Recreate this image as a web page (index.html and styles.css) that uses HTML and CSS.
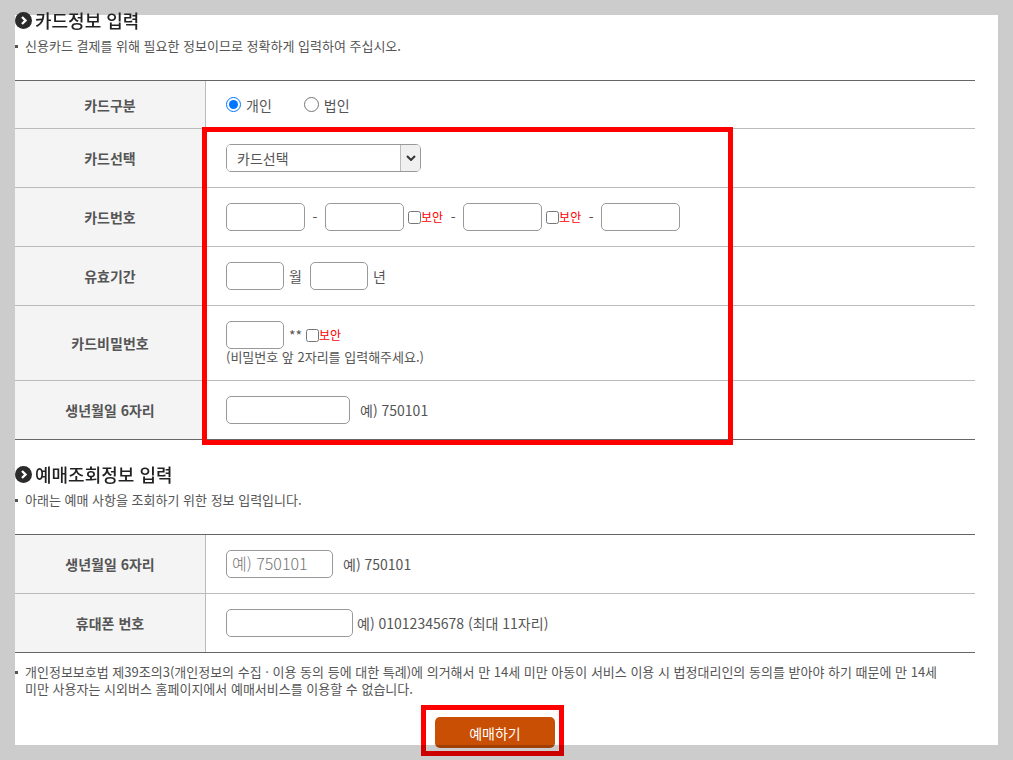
FILE: index.html
```html
<!DOCTYPE html>
<html lang="ko">
<head>
<meta charset="utf-8">
<title>카드정보 입력</title>
<link rel="stylesheet" href="styles.css">
</head>
<body>
<form class="page">
  <section class="section">
    <h2 class="heading">
      <svg class="heading-icon" viewBox="0 0 17 17" aria-hidden="true"><circle cx="8.5" cy="8.5" r="8.5" fill="#2b2b2b"/><path d="M7 5l3.5 3.5L7 12" fill="none" stroke="#fff" stroke-width="2.4"/></svg>
      카드정보 입력
    </h2>
    <p class="desc">신용카드 결제를 위해 필요한 정보이므로 정확하게 입력하여 주십시오.</p>
    <div class="table-area">
      <table class="form-table">
        <tr class="short">
          <th scope="row">카드구분</th>
          <td><div class="field">
            <label class="radio"><input type="radio" name="kind" checked>개인</label>
            <label class="radio"><input type="radio" name="kind">법인</label>
          </div></td>
        </tr>
        <tr>
          <th scope="row"><label for="card">카드선택</label></th>
          <td><div class="select">
            <select id="card"><option>카드선택</option></select>
            <span class="select-arrow"><svg viewBox="0 0 10 6" aria-hidden="true"><path d="M1 1l4 4 4-4" fill="none" stroke="#333" stroke-width="2"/></svg></span>
          </div></td>
        </tr>
        <tr>
          <th scope="row">카드번호</th>
          <td><div class="field">
            <input class="text num" type="text" aria-label="카드번호 1">
            <span class="dash">-</span>
            <input class="text num" type="text" aria-label="카드번호 2">
            <label class="secure"><input type="checkbox">보안</label>
            <span class="dash">-</span>
            <input class="text num" type="text" aria-label="카드번호 3">
            <label class="secure"><input type="checkbox">보안</label>
            <span class="dash">-</span>
            <input class="text num" type="text" aria-label="카드번호 4">
          </div></td>
        </tr>
        <tr>
          <th scope="row">유효기간</th>
          <td><div class="field">
            <input class="text short-num" id="month" type="text"><label class="unit" for="month">월</label>
            <input class="text short-num" id="year" type="text"><label class="unit" for="year">년</label>
          </div></td>
        </tr>
        <tr>
          <th scope="row"><label for="pw">카드비밀번호</label></th>
          <td>
            <div class="field">
              <input class="text short-num" id="pw" type="password">
              <span class="mask">**</span>
              <label class="secure"><input type="checkbox">보안</label>
            </div>
            <p class="help">(비밀번호 앞 2자리를 입력해주세요.)</p>
          </td>
        </tr>
        <tr>
          <th scope="row"><label for="birth">생년월일 6자리</label></th>
          <td><div class="field">
            <input class="text birth" id="birth" type="text"><span class="example">예) 750101</span>
          </div></td>
        </tr>
      </table>
      <div class="mark mark-fields"></div>
    </div>
  </section>

  <section class="section">
    <h2 class="heading">
      <svg class="heading-icon" viewBox="0 0 17 17" aria-hidden="true"><circle cx="8.5" cy="8.5" r="8.5" fill="#2b2b2b"/><path d="M7 5l3.5 3.5L7 12" fill="none" stroke="#fff" stroke-width="2.4"/></svg>
      예매조회정보 입력
    </h2>
    <p class="desc">아래는 예매 사항을 조회하기 위한 정보 입력입니다.</p>
    <table class="form-table">
      <tr>
        <th scope="row"><label for="lookup-birth">생년월일 6자리</label></th>
        <td><div class="field">
          <input class="text lookup-birth" id="lookup-birth" type="text" placeholder="예) 750101"><span class="example">예) 750101</span>
        </div></td>
      </tr>
      <tr>
        <th scope="row"><label for="phone">휴대폰 번호</label></th>
        <td><div class="field">
          <input class="text phone" id="phone" type="tel"><span class="example-near">예) 01012345678 (최대 11자리)</span>
        </div></td>
      </tr>
    </table>
  </section>

  <p class="desc notice">개인정보보호법 제39조의3(개인정보의 수집 · 이용 동의 등에 대한 특례)에 의거해서 만 14세 미만 아동이 서비스 이용 시 법정대리인의 동의를 받아야 하기 때문에 만 14세 미만 사용자는 시외버스 홈페이지에서 예매서비스를 이용할 수 없습니다.</p>

  <div class="actions">
    <div class="submit-area">
      <button class="submit" type="button">예매하기</button>
      <div class="mark mark-submit"></div>
    </div>
  </div>
</form>
<div class="shade"></div>
</body>
</html>
```
FILE: styles.css
```css
* {
  box-sizing: border-box;
}

body {
  margin: 0;
  background: #fff;
  color: #555;
  font: 14px/16px "Noto Sans CJK KR", sans-serif;
}

input,
select,
button {
  margin: 0;
  color: inherit;
  font: inherit;
}

.page {
  padding: 10px 38px 12px 15px;
}

.section + .section {
  margin-top: 24px;
}

.heading {
  position: relative;
  z-index: 2;
  display: flex;
  align-items: center;
  gap: 3px;
  margin: 0;
  color: #222;
  font-size: 18px;
  font-weight: 500;
  line-height: 20px;
}

.heading-icon {
  width: 17px;
  height: 17px;
}

.desc {
  position: relative;
  margin: 7px 0 25px;
  padding-left: 10px;
  font-size: 13px;
  line-height: 18px;
}

.desc::before {
  content: "";
  position: absolute;
  top: 8px;
  left: 0;
  width: 3px;
  height: 3px;
  background: #555;
}

.table-area {
  position: relative;
}

.form-table {
  width: 100%;
  border-top: 1px solid #666;
  border-bottom: 1px solid #666;
  border-spacing: 0;
}

.form-table th,
.form-table td {
  padding: 15px 20px;
  border-bottom: 1px solid #bbb;
}

.form-table th {
  width: 191px;
  padding: 0;
  border-right: 1px solid #bbb;
  background: #f4f4f4;
  font-weight: 700;
  text-align: center;
}

.form-table tr:last-child > * {
  border-bottom: 0;
}

.form-table .short td {
  height: 48px;
  padding-top: 0;
  padding-bottom: 0;
}

.field {
  display: flex;
  align-items: center;
}

.radio {
  display: flex;
  align-items: center;
  gap: 5px;
  margin-right: 32px;
}

.radio input {
  width: 15px;
  height: 15px;
}

.text {
  height: 28px;
  padding: 0 5px;
  border: 1px solid #999;
  border-radius: 5px;
  background: #fff;
}

.text::placeholder {
  color: #757575;
  font-size: 16px;
  font-weight: 300;
}

.num {
  width: 79px;
}

.short-num {
  width: 58px;
}

.birth {
  width: 124px;
}

.lookup-birth {
  width: 107px;
}

.phone {
  width: 127px;
}

.dash {
  width: 20px;
  text-align: center;
}

.secure {
  display: flex;
  align-items: center;
  margin-left: 4px;
  color: #f00;
  font-size: 12px;
}

.secure input {
  width: 13px;
  height: 13px;
}

.unit {
  margin: 0 8px 0 5px;
}

.mask {
  margin-left: 5px;
}

.help {
  margin: 0;
  font-size: 13px;
}

.example {
  margin-left: 10px;
}

.example-near {
  margin-left: 4px;
}

.select {
  position: relative;
  width: 195px;
  height: 28px;
  overflow: hidden;
  border: 1px solid #999;
  border-radius: 5px;
}

.select select {
  width: 100%;
  height: 100%;
  padding: 0 30px 0 10px;
  border: 0;
  background: #fff;
  appearance: none;
}

.select-arrow {
  position: absolute;
  inset: 0 0 0 auto;
  display: flex;
  align-items: center;
  justify-content: center;
  width: 20px;
  border-left: 1px solid #bbb;
  background: #f0f0f0;
  pointer-events: none;
}

.select-arrow svg {
  width: 10px;
  height: 6px;
}

.notice {
  margin: 10px 0 20px;
  padding-right: 24px;
  line-height: 17px;
}

.actions {
  display: flex;
  justify-content: center;
}

.submit-area {
  position: relative;
}

.submit {
  display: block;
  width: 120px;
  height: 31px;
  padding: 0;
  border: 0;
  border-radius: 5px;
  background: #c94f04;
  color: #fff;
}

.mark {
  position: absolute;
  border: 5px solid #f00;
  pointer-events: none;
}

.mark-fields {
  top: 47px;
  bottom: -5px;
  left: 187px;
  width: 531px;
}

.mark-submit {
  inset: -12px -9px -8px -14px;
}

.shade {
  position: fixed;
  inset: 0;
  z-index: 1;
  border: 15px solid rgba(0, 0, 0, 0.2);
  pointer-events: none;
}
```
